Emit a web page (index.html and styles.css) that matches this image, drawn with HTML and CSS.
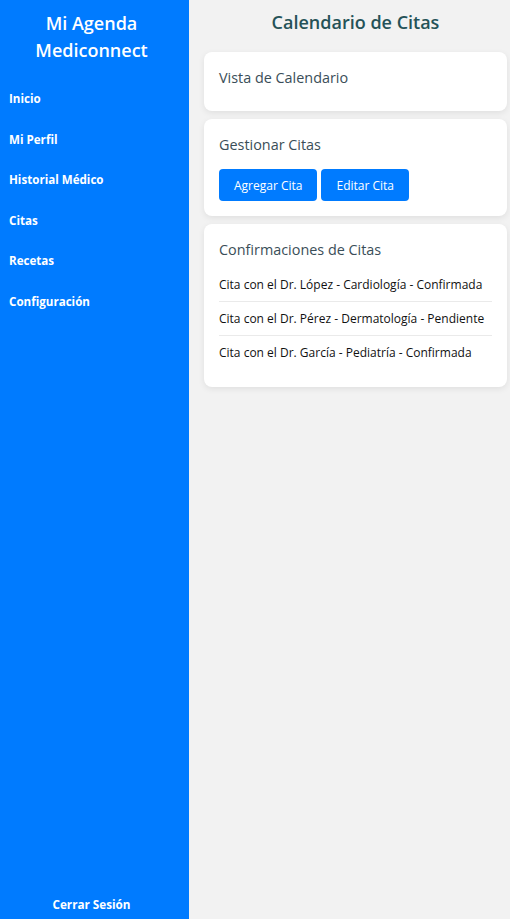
FILE: index.html
```html
<!DOCTYPE html>
<html lang="es">
<head>
<meta charset="utf-8">
<title>Mi Agenda Mediconnect</title>
<link rel="stylesheet" href="styles.css">
</head>
<body>
<div class="layout">
  <aside class="sidebar">
    <h1 class="brand">Mi Agenda Mediconnect</h1>
    <nav class="nav">
      <a href="#">Inicio</a>
      <a href="#">Mi Perfil</a>
      <a href="#">Historial Médico</a>
      <a href="#">Citas</a>
      <a href="#">Recetas</a>
      <a href="#">Configuración</a>
    </nav>
    <a class="logout" href="#">Cerrar Sesión</a>
  </aside>
  <main class="main">
    <h2 class="page-title">Calendario de Citas</h2>
    <section class="card">
      <h3 class="card-title">Vista de Calendario</h3>
    </section>
    <section class="card">
      <h3 class="card-title">Gestionar Citas</h3>
      <div class="actions">
        <button class="btn">Agregar Cita</button>
        <button class="btn">Editar Cita</button>
      </div>
    </section>
    <section class="card">
      <h3 class="card-title">Confirmaciones de Citas</h3>
      <ul class="list">
        <li>Cita con el Dr. López - Cardiología - Confirmada</li>
        <li>Cita con el Dr. Pérez - Dermatología - Pendiente</li>
        <li>Cita con el Dr. García - Pediatría - Confirmada</li>
      </ul>
    </section>
  </main>
</div>
</body>
</html>
```
FILE: styles.css
```css
* { box-sizing: border-box; }
html, body { margin: 0; padding: 0; height: 100%; }
body {
  font-family: "Open Sans", "Noto Sans", sans-serif;
  background: #f2f2f2;
}
.layout {
  display: flex;
  height: 919px;
}
.sidebar {
  width: 189px;
  flex: none;
  background: #007bff;
  color: #fff;
  display: flex;
  flex-direction: column;
  padding: 10px 15px 6px 9px;
}
.brand {
  margin: 0;
  font-size: 18px;
  line-height: 27px;
  font-weight: 600;
  text-align: center;
}
.nav {
  display: flex;
  flex-direction: column;
  margin-top: 15px;
}
.nav a {
  color: #fff;
  text-decoration: none;
  font-weight: 700;
  font-size: 11.6px;
  line-height: 18px;
  padding: 11px 0 11.5px;
}
.logout {
  margin-top: auto;
  color: #fff;
  text-decoration: none;
  font-weight: 700;
  font-size: 11.7px;
  line-height: 18px;
  text-align: center;
}
.main {
  flex: 1;
  padding: 10px 3px 0 15px;
}
.page-title {
  margin: 0 0 18px;
  font-size: 18px;
  line-height: 24px;
  font-weight: 600;
  color: #255258;
  text-align: center;
}
.card {
  background: #fff;
  border-radius: 8px;
  box-shadow: 0 2px 6px rgba(0,0,0,0.08);
  padding: 15px;
  margin-bottom: 8px;
}
.card-title {
  margin: 0 0 7px;
  font-size: 14.4px;
  line-height: 22px;
  font-weight: 400;
  color: #3a4e58;
}
.actions {
  display: flex;
  gap: 4px;
  margin-top: 13px;
}
.btn {
  font-family: inherit;
  font-size: 12px;
  color: #fff;
  background: #007bff;
  border: none;
  border-radius: 4px;
  height: 32px;
  padding: 0 15px;
}
.list {
  list-style: none;
  margin: 0;
  padding: 0 0 3px;
}
.list li {
  font-size: 12px;
  line-height: 17px;
  padding: 8px 0;
  color: #111;
  border-bottom: 1px solid #eaeaea;
}
.list li:last-child { border-bottom: none; }
```
